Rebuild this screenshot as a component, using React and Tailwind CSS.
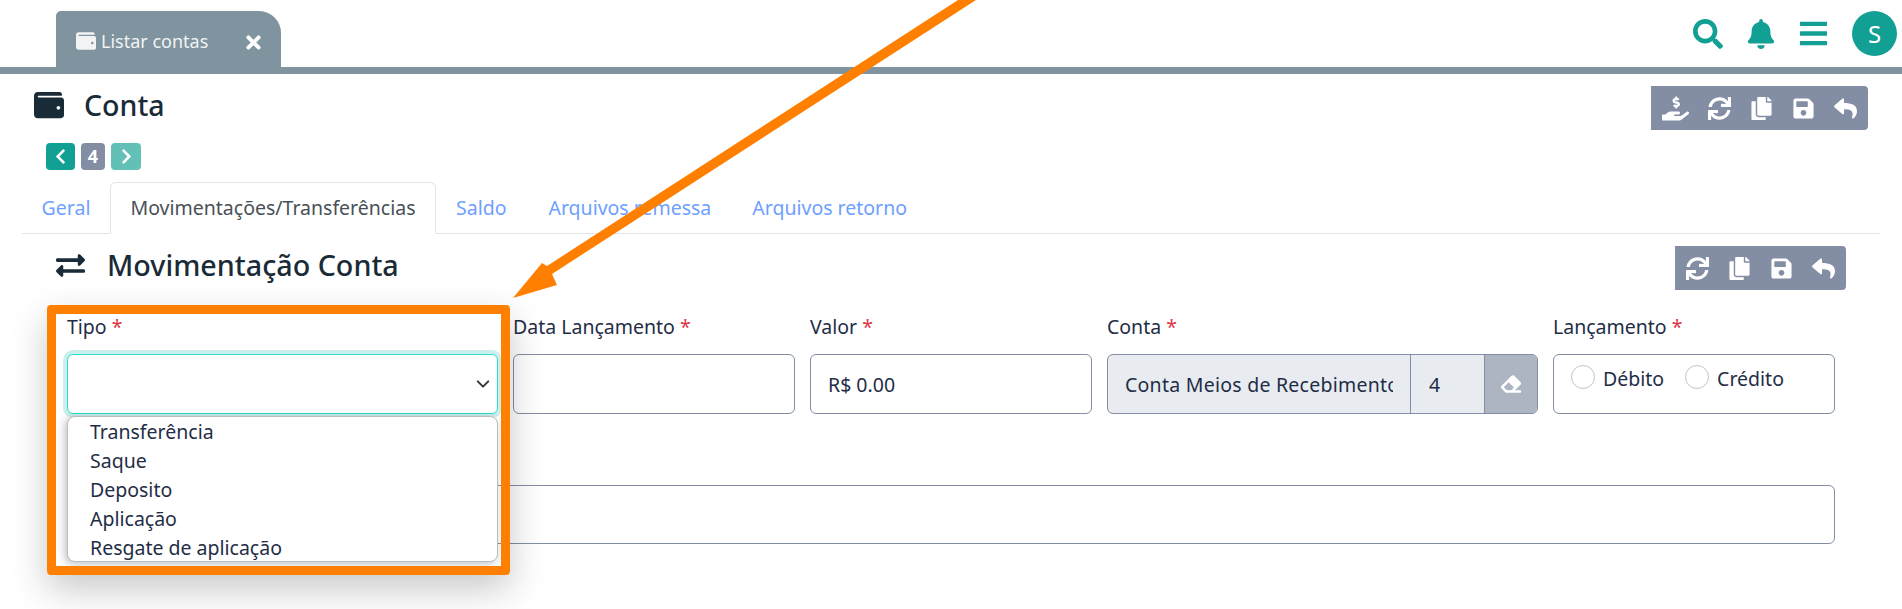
import React from "react";
import { FaWallet, FaTimes, FaSearch, FaBell, FaBars, FaChevronLeft, FaChevronRight, FaHandHoldingUsd, FaSync, FaCopy, FaSave, FaReply, FaExchangeAlt, FaEraser } from "react-icons/fa";

function Toolbar({ items }) {
  return (
    <div className="flex h-[44px] items-center rounded-r-[4px] bg-[#838da4] px-[1.5px] text-[23px] text-white">
      {items.map((I, i) => (
        <span key={i} className={I === FaHandHoldingUsd ? "flex w-[46px] justify-center text-[27px]" : "flex w-[42px] justify-center"}><I /></span>
      ))}
    </div>
  );
}

function Label({ children }) {
  return (
    <div className="mb-[14px] h-[26px] text-[19.5px] leading-[26px] text-[#1f2d46]">
      {children} <span className="text-[#dc3545]">*</span>
    </div>
  );
}

export default function App() {
  return (
    <div className="relative h-[609px] w-full overflow-hidden bg-white font-['Noto_Sans',sans-serif] text-[#1f2d46]">
      <header className="flex h-[74px] items-start justify-between border-b-[7px] border-[#7f949e] pl-[56px]">
        <div className="mt-[11px] flex h-[56px] w-[225px] items-center rounded-tl-[5px] rounded-tr-[22px] bg-[#7f949e] pl-[20px] pt-[4px] text-[18px] text-[#f1f3f4]">
          <FaWallet className="mr-[5px] text-[20px]" />
          <span>Listar contas</span>
          <FaTimes className="ml-auto mr-[17px] mt-[3px] text-[21px] text-white" />
        </div>
        <div className="mr-[5px] mt-[11px] flex items-center text-[#12a094]">
          <FaSearch className="mr-[23px] text-[30px]" />
          <FaBell className="mr-[22px] text-[30px]" />
          <FaBars className="mr-[23px] text-[31px]" />
          <div className="flex h-[45px] w-[45px] items-center justify-center rounded-full bg-[#12a094] text-[24px] text-white">S</div>
        </div>
      </header>

      <div className="flex h-[56px] items-start justify-between pl-[34px] pr-[34px] pt-[12px]">
        <div className="flex items-center pt-[1px]">
          <FaWallet className="text-[30px] text-[#1a2b38]" />
          <h1 className="ml-[20px] text-[28.5px] font-medium leading-[36px] text-[#1a2b38]">Conta</h1>
        </div>
        <Toolbar items={[FaHandHoldingUsd, FaSync, FaCopy, FaSave, FaReply]} />
      </div>

      <div className="ml-[46px] mt-[13px] flex h-[27px] items-center gap-[6px] text-white">
        <div className="flex h-[27px] w-[29px] items-center justify-center rounded-[4px] bg-[#12a094] text-[17px]"><FaChevronLeft /></div>
        <div className="flex h-[27px] w-[24px] items-center justify-center rounded-[4px] bg-[#838da4] text-[18px] font-bold">4</div>
        <div className="flex h-[27px] w-[30px] items-center justify-center rounded-[4px] bg-[#63c0b6] text-[17px]"><FaChevronRight /></div>
      </div>

      <nav className="ml-[22px] mr-[22px] mt-[12px] flex h-[52px] border-b border-[#e1e3e8] text-[19.5px] text-[#6ea0ff]">
        <div className="flex h-[52px] w-[88px] items-center justify-center">Geral</div>
        <div className="flex h-[52px] w-[326px] items-center justify-center rounded-t-[6px] border border-b-white border-[#e1e3e8] bg-white text-[#495057]">Movimentações/Transferências</div>
        <div className="flex h-[52px] items-center pl-[20px] pr-[22px]">Saldo</div>
        <div className="flex h-[52px] items-center pl-[20px] pr-[21px]">Arquivos remessa</div>
        <div className="flex h-[52px] items-center px-[20px]">Arquivos retorno</div>
      </nav>

      <div className="mt-[12px] flex h-[44px] items-center justify-between pl-[56px] pr-[56px]">
        <div className="flex -translate-y-[3px] items-center">
          <FaExchangeAlt className="text-[29px] text-[#1a2b38]" />
          <h2 className="ml-[22px] text-[28.7px] font-medium leading-[36px] text-[#1a2b38]">Movimentação Conta</h2>
        </div>
        <Toolbar items={[FaSync, FaCopy, FaSave, FaReply]} />
      </div>

      <form className="px-[67px] pt-[24px]">
        <div className="flex gap-[15px]">
          <div className="relative w-[431px]">
            <Label>Tipo</Label>
            <div className="flex h-[60px] items-center justify-end rounded-[6px] border border-[#2be0cf] bg-white pr-[7px] shadow-[0_0_0_4px_rgba(20,180,170,0.22)]">
              <svg width="14" height="14" viewBox="0 0 16 16" fill="none" stroke="#343a40" strokeWidth="2.4" strokeLinecap="round" strokeLinejoin="round"><path d="M2 5l6 6 6-6" /></svg>
            </div>
            <div className="absolute left-0 top-[102px] z-10 h-[146px] w-[431px] overflow-hidden rounded-[8px] border border-[#bdbdbd] bg-white pl-[22px] text-[19.5px] leading-[29px] shadow-[-2px_2px_8px_rgba(0,0,0,0.25)]">
              <div>Transferência</div>
              <div>Saque</div>
              <div>Deposito</div>
              <div>Aplicação</div>
              <div>Resgate de aplicação</div>
            </div>
          </div>
          <div className="w-[282px]">
            <Label>Data Lançamento</Label>
            <div className="h-[60px] rounded-[6px] border border-[#838da4]" />
          </div>
          <div className="w-[282px]">
            <Label>Valor</Label>
            <div className="flex h-[60px] items-center rounded-[6px] border border-[#838da4] pl-[17px] pt-[2px] text-[19.5px]">R$ 0.00</div>
          </div>
          <div className="w-[431px]">
            <Label>Conta</Label>
            <div className="flex h-[60px] overflow-hidden rounded-[6px] border border-[#838da4] bg-[#e8ebef] pt-0 text-[19.5px]">
              <div className="flex w-[303px] items-center overflow-hidden whitespace-nowrap border-r border-[#838da4] pl-[17px] pr-[17px] pt-[2px]"><span className="block w-full overflow-hidden tracking-[0.25px]">Conta Meios de Recebimento</span></div>
              <div className="flex w-[74px] items-center border-r border-[#838da4] pl-[18px] pt-[2px]">4</div>
              <div className="flex flex-1 items-center justify-center bg-[#adb5c2] text-[20px] text-white"><FaEraser /></div>
            </div>
          </div>
          <div className="w-[282px]">
            <Label>Lançamento</Label>
            <div className="flex h-[60px] items-start rounded-[6px] border border-[#838da4] pl-[17px] pt-[10px] text-[19.5px] leading-[26px]">
              <span className="mr-[8px] h-[24px] w-[24px] rounded-full border border-[#c0c4c8]" />
              <span className="mr-[21px] mt-[1px]">Débito</span>
              <span className="mr-[8px] h-[24px] w-[24px] rounded-full border border-[#c0c4c8]" />
              <span className="mt-[1px]">Crédito</span>
            </div>
          </div>
        </div>
        <div className="mt-[71px] h-[59px] rounded-[6px] border border-[#838da4]" />
      </form>

      <div className="pointer-events-none absolute left-[47px] top-[305px] z-20 h-[270px] w-[463px] rounded-[4px] border-[9px] border-[#ff8000] shadow-[0_14px_36px_rgba(0,0,0,0.22)]" />
      <svg className="pointer-events-none absolute left-0 top-0 z-30" width="1902" height="609" fill="#ff8000">
        <polygon points="958,0 976,0 552,274 557,285 513,298 542,263 547,266" />
      </svg>
    </div>
  );
}
